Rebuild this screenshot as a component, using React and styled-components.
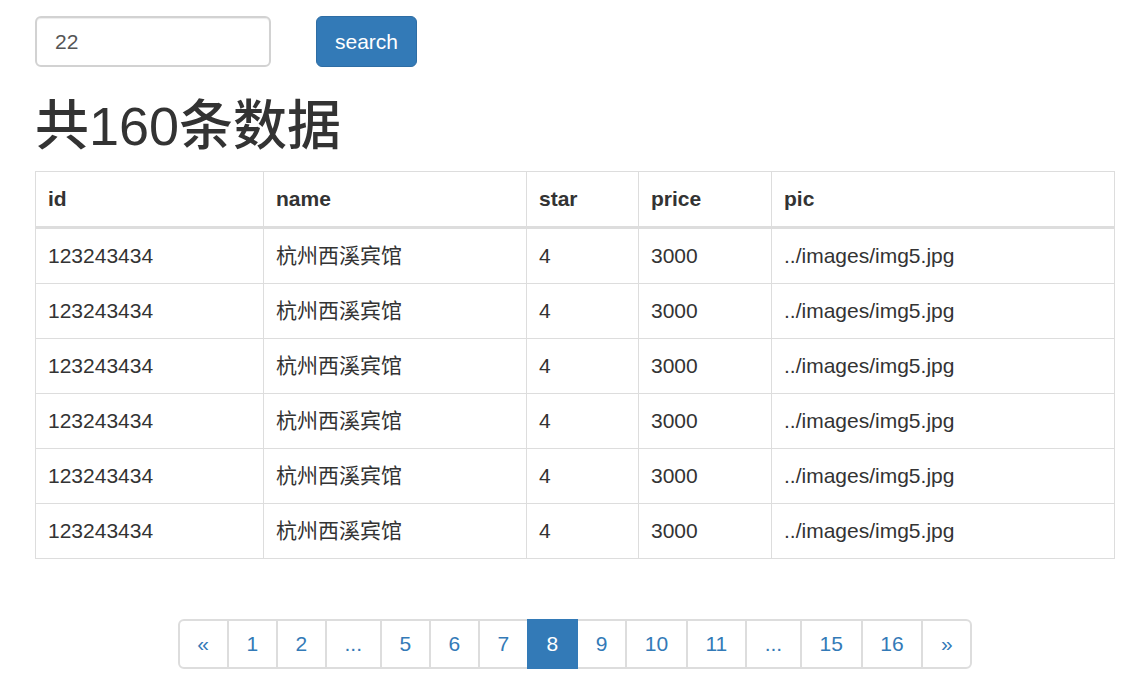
import React from "react";
import styled, { createGlobalStyle } from "styled-components";

const rows = Array.from({ length: 6 }, () => ({
  id: "123243434",
  name: "杭州西溪宾馆",
  star: "4",
  price: "3000",
  pic: "../images/img5.jpg",
}));

const pages = ["«", "1", "2", "...", "5", "6", "7", "8", "9", "10", "11", "...", "15", "16", "»"];

const App = () => {
  return (
    <Page>
      <GlobalStyle />
      <SearchBar>
        <SearchInput defaultValue="22" />
        <SearchButton>search</SearchButton>
      </SearchBar>
      <Title>共160条数据</Title>
      <Table>
        <colgroup>
          <col style={{ width: 228 }} />
          <col style={{ width: 263 }} />
          <col style={{ width: 112 }} />
          <col style={{ width: 133 }} />
          <col />
        </colgroup>
        <thead>
          <tr>
            <Th>id</Th>
            <Th>name</Th>
            <Th>star</Th>
            <Th>price</Th>
            <Th>pic</Th>
          </tr>
        </thead>
        <tbody>
          {rows.map((r, i) => (
            <tr key={i}>
              <Td>{r.id}</Td>
              <Td>{r.name}</Td>
              <Td>{r.star}</Td>
              <Td>{r.price}</Td>
              <Td>{r.pic}</Td>
            </tr>
          ))}
        </tbody>
      </Table>
      <PagerWrap>
        <Pager>
          {pages.map((p, i) => (
            <PageItem key={i} $active={p === "8"}>
              {p}
            </PageItem>
          ))}
        </Pager>
      </PagerWrap>
    </Page>
  );
};

const GlobalStyle = createGlobalStyle`
  body {
    margin: 0;
    background: #fff;
    font-family: "Liberation Sans", Arial, "Noto Sans CJK SC", sans-serif;
    font-size: 21px;
    line-height: 30px;
    color: #333;
  }
`;

const Page = styled.div`
  padding: 16px 32px 0 35px;
`;

const SearchBar = styled.div`
  display: flex;
  gap: 45px;
`;

const SearchInput = styled.input`
  box-sizing: border-box;
  width: 236px;
  height: 51px;
  padding: 9px 18px;
  font-family: inherit;
  font-size: 21px;
  color: #555;
  border: 2px solid #d2d2d2;
  border-radius: 6px;
  box-shadow: inset 0 1px 1px rgba(0, 0, 0, 0.075);
  outline: none;
`;

const SearchButton = styled.button`
  box-sizing: border-box;
  height: 51px;
  padding: 9px 18px;
  font-family: inherit;
  font-size: 21px;
  line-height: 30px;
  color: #fff;
  background: #337ab7;
  border: 1px solid #2e6da4;
  border-radius: 6px;
`;

const Title = styled.h1`
  margin: 30px 0 15px;
  font-size: 54px;
  font-weight: 500;
  line-height: 59px;
  color: #333;
`;

const Table = styled.table`
  width: 1080px;
  border-collapse: collapse;
  border: 1px solid #ddd;
  table-layout: fixed;
`;

const Th = styled.th`
  text-align: left;
  font-weight: bold;
  padding: 12px;
  height: 30px;
  border: 1px solid #ddd;
  border-bottom: 3px solid #ddd;
  vertical-align: bottom;
`;

const Td = styled.td`
  padding: 12px;
  height: 30px;
  border: 1px solid #ddd;
  vertical-align: top;
`;

const PagerWrap = styled.div`
  display: flex;
  justify-content: center;
  margin-top: 60px;
`;

const Pager = styled.div`
  display: flex;
`;

const PageItem = styled.a`
  padding: 8px 17.7px;
  line-height: 30px;
  font-size: 21px;
  color: ${(p) => (p.$active ? "#fff" : "#337ab7")};
  background: ${(p) => (p.$active ? "#337ab7" : "#fff")};
  border: 2px solid ${(p) => (p.$active ? "#337ab7" : "#ddd")};
  margin-left: -2px;
  position: relative;
  z-index: ${(p) => (p.$active ? 2 : 0)};
  &:first-child {
    margin-left: 0;
    border-radius: 6px 0 0 6px;
  }
  &:last-child {
    border-radius: 0 6px 6px 0;
  }
`;

export default App;
